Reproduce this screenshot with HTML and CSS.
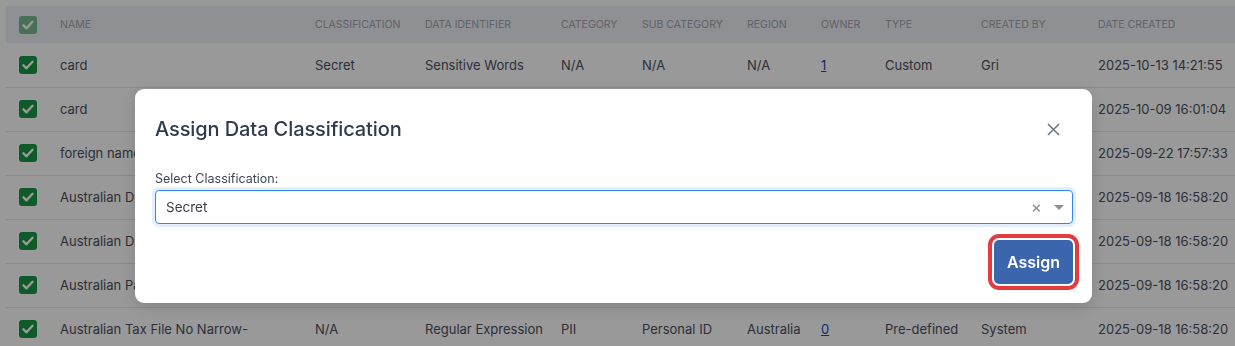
FILE: index.html
```html
<!DOCTYPE html>
<html lang="en">
<head>
    <meta charset="UTF-8">
    <meta name="viewport" content="width=device-width, initial-scale=1.0">
    <title>Data Identifiers</title>
    <link rel="stylesheet" href="styles.css">
</head>
<body>
    <table class="grid">
        <colgroup>
            <col class="c-chk"><col class="c-name"><col class="c-class"><col class="c-ident">
            <col class="c-cat"><col class="c-sub"><col class="c-region"><col class="c-owner">
            <col class="c-type"><col class="c-by"><col class="c-date">
        </colgroup>
        <thead>
            <tr>
                <th><span class="check check-head"><svg viewBox="0 0 18 18"><path d="M4.5 9.3l3 3 6-6.5" /></svg></span></th>
                <th>Name</th>
                <th>Classification</th>
                <th>Data Identifier</th>
                <th>Category</th>
                <th>Sub Category</th>
                <th>Region</th>
                <th>Owner</th>
                <th>Type</th>
                <th>Created By</th>
                <th>Date Created</th>
            </tr>
        </thead>
        <tbody>
            <tr>
                <td><span class="check"><svg viewBox="0 0 18 18"><path d="M4.5 9.3l3 3 6-6.5" /></svg></span></td>
                <td>card</td><td>Secret</td><td>Sensitive Words</td><td>N/A</td><td>N/A</td><td>N/A</td>
                <td><a href="#" class="owner">1</a></td><td>Custom</td><td>Gri</td><td>2025-10-13 14:21:55</td>
            </tr>
            <tr>
                <td><span class="check"><svg viewBox="0 0 18 18"><path d="M4.5 9.3l3 3 6-6.5" /></svg></span></td>
                <td>card</td><td>Secret</td><td>Sensitive Words</td><td>N/A</td><td>N/A</td><td>N/A</td>
                <td><a href="#" class="owner">1</a></td><td>Custom</td><td>Gri</td><td>2025-10-09 16:01:04</td>
            </tr>
            <tr>
                <td><span class="check"><svg viewBox="0 0 18 18"><path d="M4.5 9.3l3 3 6-6.5" /></svg></span></td>
                <td>foreign name</td><td>N/A</td><td>Sensitive Words</td><td>N/A</td><td>N/A</td><td>N/A</td>
                <td><a href="#" class="owner">1</a></td><td>Custom</td><td>Gri</td><td>2025-09-22 17:57:33</td>
            </tr>
            <tr>
                <td><span class="check"><svg viewBox="0 0 18 18"><path d="M4.5 9.3l3 3 6-6.5" /></svg></span></td>
                <td>Australian Driver</td><td>N/A</td><td>Regular Expression</td><td>PII</td><td>Personal ID</td><td>Australia</td>
                <td><a href="#" class="owner">0</a></td><td>Pre-defined</td><td>System</td><td>2025-09-18 16:58:20</td>
            </tr>
            <tr>
                <td><span class="check"><svg viewBox="0 0 18 18"><path d="M4.5 9.3l3 3 6-6.5" /></svg></span></td>
                <td>Australian Driver License Narrow</td><td>N/A</td><td>Regular Expression</td><td>PII</td><td>Personal ID</td><td>Australia</td>
                <td><a href="#" class="owner">0</a></td><td>Pre-defined</td><td>System</td><td>2025-09-18 16:58:20</td>
            </tr>
            <tr>
                <td><span class="check"><svg viewBox="0 0 18 18"><path d="M4.5 9.3l3 3 6-6.5" /></svg></span></td>
                <td>Australian Passport Number</td><td>N/A</td><td>Regular Expression</td><td>PII</td><td>Personal ID</td><td>Australia</td>
                <td><a href="#" class="owner">0</a></td><td>Pre-defined</td><td>System</td><td>2025-09-18 16:58:20</td>
            </tr>
            <tr>
                <td><span class="check"><svg viewBox="0 0 18 18"><path d="M4.5 9.3l3 3 6-6.5" /></svg></span></td>
                <td>Australian Tax File No Narrow-</td><td>N/A</td><td>Regular Expression</td><td>PII</td><td>Personal ID</td><td>Australia</td>
                <td><a href="#" class="owner">0</a></td><td>Pre-defined</td><td>System</td><td>2025-09-18 16:58:20</td>
            </tr>
        </tbody>
    </table>

    <div class="backdrop">
        <div class="modal">
            <div class="modal-header">
                <h2>Assign Data Classification</h2>
                <button class="close-btn" aria-label="Close">
                    <svg viewBox="0 0 14 14"><path d="M1 1l12 12M13 1L1 13" /></svg>
                </button>
            </div>
            <label class="field-label" for="classification">Select Classification:</label>
            <div class="select-box" id="classification">
                <span class="select-value">Secret</span>
                <span class="select-clear">×</span>
                <span class="select-arrow"></span>
            </div>
            <div class="modal-footer">
                <button class="assign-btn">Assign</button>
            </div>
        </div>
    </div>
</body>
</html>
```

FILE: styles.css
```css
* {
    margin: 0;
    padding: 0;
    box-sizing: border-box;
}

body {
    font-family: Inter, "Noto Sans", sans-serif;
    background-color: #fff;
    color: #4b5563;
    padding: 6px 0 0 6px;
    overflow: hidden;
}

/* table under the dialog */
.grid {
    width: 1229px;
    border-collapse: collapse;
    table-layout: fixed;
}

.c-chk { width: 44px; }
.c-name { width: 255px; }
.c-class { width: 110px; }
.c-ident { width: 136px; }
.c-cat { width: 81px; }
.c-sub { width: 105px; }
.c-region { width: 74px; }
.c-owner { width: 64px; }
.c-type { width: 96px; }
.c-by { width: 117px; }
.c-date { width: 147px; }

th {
    background-color: #edf0f6;
    height: 37px;
    padding: 0 10px;
    text-align: left;
    font-size: 10.5px;
    font-weight: 400;
    text-transform: uppercase;
    color: #a2a5ad;
    white-space: nowrap;
}

td {
    height: 44px;
    padding: 0 10px;
    font-size: 13px;
    color: #4b5060;
    border-bottom: 1px solid #e6e8ec;
    white-space: nowrap;
    overflow: hidden;
}

th:first-child, td:first-child {
    padding: 0 0 0 13px;
}

.check {
    display: block;
    width: 18px;
    height: 18px;
    border-radius: 3px;
    background-color: #1a9645;
}

.check svg {
    width: 18px;
    height: 18px;
    display: block;
}

.check path {
    fill: none;
    stroke: #fff;
    stroke-width: 2.4;
    stroke-linecap: round;
    stroke-linejoin: round;
}

.check-head {
    background-color: #78bb8c;
}

.owner {
    color: #2447b8;
    text-decoration: underline;
}

/* dialog */
.backdrop {
    position: fixed;
    inset: 0;
    background-color: rgba(0, 0, 0, 0.4);
    padding: 89px 0 0 135px;
}

.modal {
    width: 957px;
    background-color: #fff;
    border-radius: 9px;
    padding: 26px 19px 19px 20px;
    box-shadow: 0 4px 16px rgba(0, 0, 0, 0.15);
}

.modal-header {
    display: flex;
    justify-content: space-between;
    align-items: center;
    height: 28px;
    margin-bottom: 27px;
}

.modal-header h2 {
    font-size: 20px;
    font-weight: 500;
    color: #2f3b4c;
    line-height: 28px;
    letter-spacing: -0.1px;
}

.close-btn {
    background: none;
    border: none;
    width: 20px;
    height: 20px;
    margin-right: 10px;
    display: flex;
    align-items: center;
    justify-content: center;
    cursor: pointer;
}

.close-btn svg {
    width: 13px;
    height: 13px;
}

.close-btn path {
    stroke: #6b7280;
    stroke-width: 1.6;
    fill: none;
}

.field-label {
    display: block;
    font-size: 12.5px;
    line-height: 18px;
    color: #3f4652;
    margin-bottom: 2px;
}

.select-box {
    display: flex;
    align-items: center;
    height: 34px;
    border: 1px solid #2b88f5;
    border-radius: 4px;
    box-shadow: 0 0 0 3px #e3effd;
    padding: 0 8px 0 10px;
}

.select-value {
    flex: 1;
    font-size: 13.5px;
    color: #3b3f47;
}

.select-clear {
    font-size: 17px;
    color: #8a8a8a;
    margin-right: 12px;
    line-height: 1;
}

.select-arrow {
    width: 0;
    height: 0;
    border-left: 5px solid transparent;
    border-right: 5px solid transparent;
    border-top: 5px solid #8f8f8f;
}

.modal-footer {
    display: flex;
    justify-content: flex-end;
    margin-top: 16px;
}

.assign-btn {
    width: 79px;
    height: 44px;
    background-color: #3b65ad;
    color: #fff;
    border: none;
    border-radius: 5px;
    font-family: Inter, "Noto Sans", sans-serif;
    font-size: 16px;
    font-weight: 600;
    outline: 4px solid #e33b3f;
    outline-offset: 2px;
    cursor: pointer;
}
```
